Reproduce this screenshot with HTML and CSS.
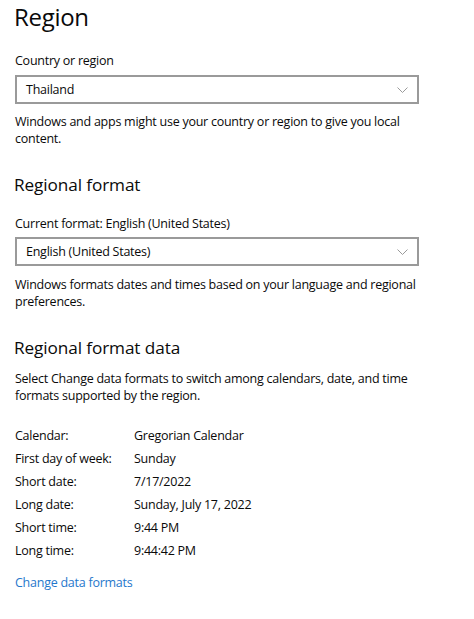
FILE: index.html
```html
<!DOCTYPE html>
<html>
<head>
<meta charset="utf-8">
<link rel="stylesheet" href="styles.css">
</head>
<body>
<main class="page">
  <h1 class="title">Region</h1>

  <div class="label first-label">Country or region</div>
  <div class="select">
    <span>Thailand</span>
    <svg class="chev" width="11" height="6" viewBox="0 0 11 6"><path d="M0.5 0.5 L5.5 5.5 L10.5 0.5" fill="none" stroke="#9a9a9a" stroke-width="1"/></svg>
  </div>
  <p class="desc">Windows and apps might use your country or region to give you local content.</p>

  <h2 class="section">Regional format</h2>
  <div class="label">Current format: English (United States)</div>
  <div class="select select-second">
    <span>English (United States)</span>
    <svg class="chev" width="11" height="6" viewBox="0 0 11 6"><path d="M0.5 0.5 L5.5 5.5 L10.5 0.5" fill="none" stroke="#9a9a9a" stroke-width="1"/></svg>
  </div>
  <p class="desc desc-after2">Windows formats dates and times based on your language and regional preferences.</p>

  <h2 class="section">Regional format data</h2>
  <p class="desc desc-tight">Select Change data formats to switch among calendars, date, and time formats supported by the region.</p>

  <dl class="data">
    <dt>Calendar:</dt><dd>Gregorian Calendar</dd>
    <dt>First day of week:</dt><dd>Sunday</dd>
    <dt>Short date:</dt><dd>7/17/2022</dd>
    <dt>Long date:</dt><dd>Sunday, July 17, 2022</dd>
    <dt>Short time:</dt><dd>9:44 PM</dd>
    <dt>Long time:</dt><dd>9:44:42 PM</dd>
  </dl>

  <a class="link" href="#">Change data formats</a>
</main>
</body>
</html>
```
FILE: styles.css
```css
html, body {
  margin: 0;
  padding: 0;
  background: #ffffff;
}
body {
  font-family: "Open Sans", "Noto Sans", "Liberation Sans", sans-serif;
  color: #0a0a0a;
  font-size: 12.5px;
  letter-spacing: -0.25px;
}
.page {
  padding: 0 15px;
  width: 404px;
}
.title {
  margin: 0 0 0 -1px;
  font-size: 24px;
  font-weight: 400;
  line-height: 34px;
  letter-spacing: -0.3px;
}
.label {
  line-height: 18px;
  margin-top: 0;
}
.first-label {
  margin-top: 18px;
}
.select {
  margin-top: 5px;
  height: 29px;
  box-sizing: border-box;
  border: 2px solid #9a9a9a;
  display: flex;
  align-items: center;
  justify-content: space-between;
  padding: 0 9px 0 9px;
}
.select-second {
  margin-top: 4px;
}
.chev {
  display: block;
}
.desc {
  margin: 9px 0 0 0;
  line-height: 17px;
}
.desc-after2 {
  margin-top: 10px;
}
.section {
  margin: 24px 0 0 -1px;
  font-size: 17.2px;
  font-weight: 400;
  line-height: 28px;
  letter-spacing: -0.1px;
}
.section + .label {
  margin-top: 16px;
}
.desc-tight {
  margin-top: 8px;
}
.data {
  margin: 20px 0 0 0;
  display: grid;
  grid-template-columns: 119px auto;
  line-height: 23px;
}
.data dt, .data dd {
  margin: 0;
}
.link {
  display: block;
  margin-top: 12px;
  line-height: 18px;
  color: #1f78cc;
  text-decoration: none;
}
```
